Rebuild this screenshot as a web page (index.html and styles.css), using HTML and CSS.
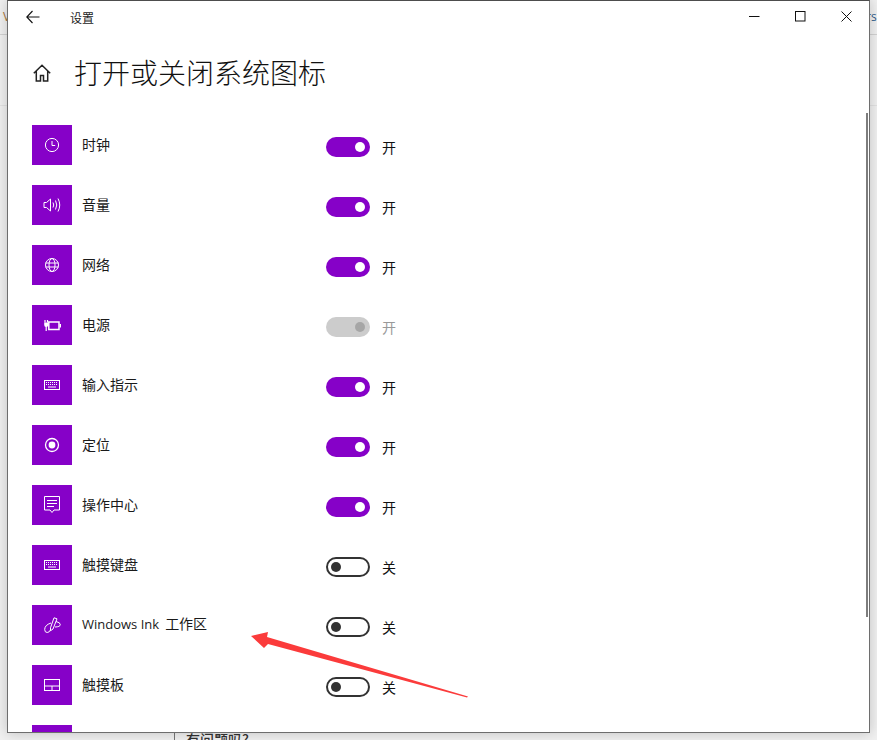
FILE: index.html
```html
<!DOCTYPE html>
<html lang="zh-CN">
<head>
<meta charset="utf-8">
<title>设置</title>
<link rel="stylesheet" href="styles.css">
</head>
<body>
<div class="desktop">
  <span class="bg-frag bg-v">V</span>
  <span class="bg-frag bg-rs">rs</span>
  <div class="bg-line bg-line-left"></div>
  <div class="bg-line bg-line-right"></div>
  <div class="bg-line bg-line-left2"></div>
  <div class="bg-line bg-line-right2"></div>
  <div class="bg-divider"></div>
  <span class="bg-help">有问题吗?</span>

  <div class="window">
    <header class="titlebar">
      <svg class="back" width="14" height="14" viewBox="0 0 14 14"><path d="M6.500 1 .8 7l5.700 6M1 7h12.500" fill="none" stroke="#111" stroke-width="1.100"/></svg>
      <span class="app-name">设置</span>
      <div class="win-controls">
        <svg width="11" height="11" viewBox="0 0 11 11"><path d="M0 5.500h10.500" stroke="#111" fill="none"/></svg>
        <svg width="11" height="11" viewBox="0 0 11 11"><rect x=".5" y=".5" width="9.500" height="9.500" stroke="#111" fill="none"/></svg>
        <svg width="11" height="11" viewBox="0 0 11 11"><path d="M.5.500l10 10M10.500.500l-10 10" stroke="#111" fill="none"/></svg>
      </div>
    </header>
    <div class="page-head">
      <svg class="home" width="18" height="18" viewBox="0 0 18 18"><path d="M.8 9.200 9 1.300l8.200 7.900M3.300 7v10h4.200v-5.500h3V17h4.200V7" fill="none" stroke="#222" stroke-width="1.500"/></svg>
      <h1>打开或关闭系统图标</h1>
    </div>
    <div class="list">
      <div class="row">
        <div class="tile"><svg width="16" height="16" viewBox="0 0 16 16"><circle cx="8" cy="8" r="6.600"/><path d="M8 4v4.500h3.200"/></svg></div>
        <span class="label">时钟</span>
        <span class="toggle on"><i></i></span><span class="state">开</span>
      </div>
      <div class="row">
        <div class="tile"><svg width="18" height="16" viewBox="0 0 18 16"><path d="M1 5.500h2.500L7.500 2v12L3.500 10.500H1z"/><path d="M10 5.500q1.500 2.500 0 5M12.500 3.500q2.500 4.500 0 9M15 1.500q3.500 6.500 0 13"/></svg></div>
        <span class="label">音量</span>
        <span class="toggle on"><i></i></span><span class="state">开</span>
      </div>
      <div class="row">
        <div class="tile"><svg width="16" height="16" viewBox="0 0 16 16"><circle cx="8" cy="8" r="6.500"/><ellipse cx="8" cy="8" rx="3" ry="6.500"/><path d="M1.500 6h13M1.500 10h13"/></svg></div>
        <span class="label">网络</span>
        <span class="toggle on"><i></i></span><span class="state">开</span>
      </div>
      <div class="row">
        <div class="tile"><svg width="17" height="11" viewBox="0 0 17 11"><rect x="4.800" y="2" width="10.200" height="7.500" stroke-width="1.500"/><path d="M16.300 4v3.500" stroke-width="1.500"/><path d="M1 0v2.500M3.500 0v2.500" stroke-width="1.200"/><path class="solid" d="M.2 2.500h4v2.500a2 2 0 0 1-4 0z"/><path d="M2.200 6v5" stroke-width="1.200"/></svg></div>
        <span class="label">电源</span>
        <span class="toggle disabled"><i></i></span><span class="state muted">开</span>
      </div>
      <div class="row">
        <div class="tile"><svg width="16" height="10" viewBox="0 0 16 10"><rect x=".5" y=".5" width="15" height="9"/><path d="M2 2.500h12M2 4.500h12" stroke-dasharray="1 1"/><path d="M4 7h8"/></svg></div>
        <span class="label">输入指示</span>
        <span class="toggle on"><i></i></span><span class="state">开</span>
      </div>
      <div class="row">
        <div class="tile"><svg width="16" height="16" viewBox="0 0 16 16"><circle cx="8" cy="8" r="6.500" stroke-width="1.300"/><circle class="solid" cx="8" cy="8" r="3.400"/></svg></div>
        <span class="label">定位</span>
        <span class="toggle on"><i></i></span><span class="state">开</span>
      </div>
      <div class="row">
        <div class="tile"><svg width="16" height="18" viewBox="0 0 16 18"><path d="M.5.500h15v13.500h-5.500L8 16.500 6 14H.5z"/><path d="M3 4.500h10M3 7.500h10M3 10.500h7"/></svg></div>
        <span class="label">操作中心</span>
        <span class="toggle on"><i></i></span><span class="state">开</span>
      </div>
      <div class="row">
        <div class="tile"><svg width="16" height="10" viewBox="0 0 16 10"><rect x=".5" y=".5" width="15" height="9"/><path d="M2 2.500h12M2 4.500h12" stroke-dasharray="1 1"/><path d="M4 7h8"/></svg></div>
        <span class="label">触摸键盘</span>
        <span class="toggle off"><i></i></span><span class="state">关</span>
      </div>
      <div class="row">
        <div class="tile"><svg width="17" height="17" viewBox="0 0 17 17"><path d="M10 .8 13 1.800 9 12 6.500 13.800 6.500 10.800z"/><path d="M12 4.500q4.500 1 4.300 3.200T11 10M7 6q-6.300 2-6.300 6.500 0 3 2.500 3 2.300 0 3.300-2.700"/></svg></div>
        <span class="label"><span class="latin">Windows Ink</span>工作区</span>
        <span class="toggle off"><i></i></span><span class="state">关</span>
      </div>
      <div class="row">
        <div class="tile"><svg width="16" height="12" viewBox="0 0 16 12"><rect x=".5" y=".5" width="15" height="11"/><path d="M.5 7h15M8 7v4.500"/></svg></div>
        <span class="label">触摸板</span>
        <span class="toggle off"><i></i></span><span class="state">关</span>
      </div>
      <div class="row">
        <div class="tile"></div>
      </div>
    </div>
    <div class="scrollbar"></div>
  </div>

  <svg class="arrow" width="220" height="76" viewBox="0 0 220 76"><path d="M1 8 18 4 17 9 218 68.500 217 69.500 18 16 14 20z" fill="#fb3b3b"/></svg>
</div>
</body>
</html>
```
FILE: styles.css
```css
* { box-sizing: border-box; }
html, body { margin: 0; padding: 0; }
body {
  font-family: "Noto Sans CJK SC", "Open Sans", sans-serif;
  background: #f1f1f1;
  overflow: hidden;
}
.desktop {
  position: relative;
  width: 877px;
  height: 740px;
  overflow: hidden;
  background: #f0f0f0;
}
.bg-frag {
  position: absolute;
  top: 9px;
  font: 12px/16px "Open Sans", sans-serif;
  color: #33608c;
}
.bg-v { left: 3px; color: #a8763c; }
.bg-rs { left: 866px; }
.bg-line { position: absolute; height: 1px; background: #d2d2d2; }
.bg-line-left { left: 0; top: 34px; width: 8px; }
.bg-line-right { left: 870px; top: 34px; width: 7px; }
.bg-line-left2 { left: 0; top: 105px; width: 8px; background: #e2e2e2; }
.bg-line-right2 { left: 870px; top: 105px; width: 7px; background: #e2e2e2; }
.bg-divider { position: absolute; left: 174px; top: 733px; width: 1px; height: 7px; background: #777; }
.bg-help {
  position: absolute;
  left: 186px;
  top: 730px;
  font-size: 14px;
  line-height: 18px;
  font-weight: 500;
  color: #333;
}
.window {
  position: absolute;
  left: 7px;
  top: 0;
  width: 863px;
  height: 733px;
  background: #fff;
  border: 1px solid #6e6e6e;
  border-top-color: #4d4d4d;
  overflow: hidden;
  box-shadow: 0 0 12px rgba(0, 0, 0, .2);
}
.titlebar {
  display: flex;
  align-items: center;
  height: 33px;
  padding-left: 18px;
}
.back { flex: none; margin-top: -2px; }
.app-name { margin-left: 30px; font-size: 12px; line-height: 16px; color: #222; }
.win-controls {
  display: flex;
  gap: 35px;
  margin-left: auto;
  padding-right: 17px;
  margin-top: -2px;
}
.page-head {
  display: flex;
  align-items: center;
  height: 80px;
  padding-left: 25px;
}
.home { flex: none; margin-top: -3px; }
h1 {
  margin: -4px 0 0 23px;
  font-size: 28px;
  line-height: 40px;
  font-weight: 300;
  color: #111;
}
.list { padding: 11px 0 0 24px; }
.row {
  display: flex;
  align-items: center;
  height: 40px;
  margin-bottom: 20px;
}
.tile {
  flex: none;
  display: flex;
  align-items: center;
  justify-content: center;
  width: 40px;
  height: 40px;
  background: #8601c8;
}
.tile svg { fill: none; stroke: #fff; stroke-width: 1; }
.tile svg .solid { fill: #fff; stroke: none; }
.label {
  flex: none;
  width: 244px;
  margin-left: 10px;
  margin-top: -3px;
  font-size: 14px;
  line-height: 18px;
  color: #1a1a1a;
  font-family: "Noto Sans CJK SC", sans-serif;
}
.latin {
  font-family: "Open Sans", sans-serif;
  font-size: 13px;
  margin-right: 6px;
}
.toggle {
  flex: none;
  display: flex;
  align-items: center;
  justify-content: flex-end;
  width: 44px;
  height: 20px;
  padding: 0 5px;
  border-radius: 10px;
  margin-top: 4px;
}
.toggle i { display: block; width: 10px; height: 10px; border-radius: 50%; }
.toggle.on { background: #8601c8; }
.toggle.on i { background: #fff; }
.toggle.disabled { background: #cccccc; }
.toggle.disabled i { background: #a6a6a6; }
.toggle.off { justify-content: flex-start; background: #fff; border: 2px solid #333; padding: 0 3px; }
.toggle.off i { background: #333; }
.state {
  margin-left: 12px;
  margin-top: 3px;
  font-size: 14px;
  line-height: 20px;
  color: #111;
}
.state.muted { color: #999; }
.scrollbar {
  position: absolute;
  right: 1px;
  top: 112px;
  width: 2px;
  height: 504px;
  background: #7d7d7d;
}
.arrow {
  position: absolute;
  left: 250px;
  top: 628px;
}
```
